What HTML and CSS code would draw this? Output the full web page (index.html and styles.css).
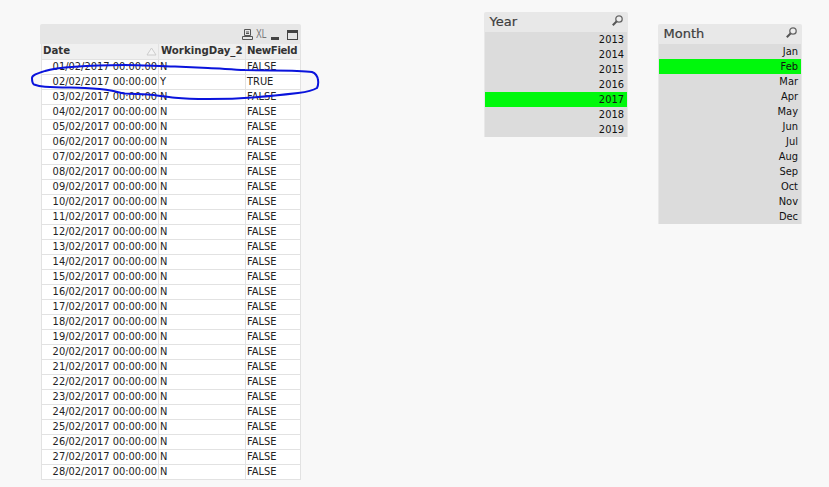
FILE: index.html
```html
<!DOCTYPE html>
<html lang="en">
<head>
<meta charset="utf-8">
<title>Working days</title>
<link rel="stylesheet" href="styles.css">
</head>
<body>
<main class="sheet">
  <section class="object table-object">
    <div class="table-caption">
      <svg class="ico" width="11" height="13" viewBox="0 0 11 13"><path d="M2.500 1.500h6v6h-6zM4 4h3M4 5.500h3M.5 8.500h10v3H.5z" fill="none" stroke="#555" stroke-width="1"/></svg>
      <span class="xl">XL</span>
      <svg class="ico ico-min" width="8" height="13" viewBox="0 0 8 13"><rect x="0" y="9" width="8" height="3" fill="#444"/></svg>
      <svg class="ico ico-max" width="11" height="13" viewBox="0 0 11 13"><rect x=".5" y="2.500" width="10" height="9" fill="none" stroke="#444"/><rect x="0" y="2" width="11" height="3" fill="#444"/></svg>
    </div>
    <table class="grid">
      <colgroup><col class="c-date"><col class="c-day"><col class="c-field"></colgroup>
      <thead>
        <tr><th class="sorted">Date<svg class="sort" width="11" height="9" viewBox="0 0 11 9"><path d="M5.500 1 10 8H1z" fill="#f4f4f4" stroke="#ccc"/></svg></th><th class="wide">WorkingDay_2</th><th class="tight">NewField</th></tr>
      </thead>
      <tbody id="rows"></tbody>
    </table>
  </section>

  <section class="object list year">
    <header class="list-caption"><h2>Year</h2><svg class="search" width="13" height="13" viewBox="0 0 13 13"><circle cx="8" cy="5" r="3.200" fill="#eee" stroke="#666" stroke-width="1.300"/><path d="M5.500 7.500 1.800 11.200" stroke="#555" stroke-width="2"/></svg></header>
    <ul class="items">
      <li>2013</li><li>2014</li><li>2015</li><li>2016</li><li class="on">2017</li><li>2018</li><li>2019</li>
    </ul>
  </section>

  <section class="object list month">
    <header class="list-caption"><h2>Month</h2><svg class="search" width="13" height="13" viewBox="0 0 13 13"><circle cx="8" cy="5" r="3.200" fill="#eee" stroke="#666" stroke-width="1.300"/><path d="M5.500 7.500 1.800 11.200" stroke="#555" stroke-width="2"/></svg></header>
    <ul class="items">
      <li>Jan</li><li class="on">Feb</li><li>Mar</li><li>Apr</li><li>May</li><li>Jun</li><li>Jul</li><li>Aug</li><li>Sep</li><li>Oct</li><li>Nov</li><li>Dec</li>
    </ul>
  </section>

  <svg class="scribble" width="829" height="487" viewBox="0 0 829 487"><path d="M175 66.500C155 66 140 65 125 65C105 65 90 65.500 75 66.700C62 67.500 52 68.500 45 71C37 73.500 32 75 32 78C32 81 32 83 34 84.500C38 86 42 86.500 45 86.700C60 87.500 72 87.500 85 88C95 88.500 105 89.500 112 90.700C118 92 120 93 125 93.500C133 94 140 94 148 94.500C158 95.500 166 97 175 97.700C185 98.700 197 99 208 99C225 99 242 98.300 258 97C272 96 285 94.500 298 93C306 92 313 90.500 317 88C318.500 85 318.500 83 318 80C317.500 76 316 73.500 312 72C306 71 298 71 292 70.700C276 70.500 260 70.200 245 70C232 69.500 220 68.500 208 68C197 67.500 186 67 175 66.500Z" fill="none" stroke="#0a14dc" stroke-width="2"/></svg>
</main>
<script src="rows.js"></script>
</body>
</html>
```

FILE: rows.js
```js
var body = document.getElementById("rows");
for (var d = 1; d <= 28; d++) {
  var day = (d < 10 ? "0" : "") + d;
  var yes = d === 2;
  var tr = document.createElement("tr");
  [day + "/02/2017 00:00:00", yes ? "Y" : "N", yes ? "TRUE" : "FALSE"].forEach(function (text, i) {
    var td = document.createElement("td");
    td.textContent = text;
    if (i === 0) td.className = "num";
    tr.appendChild(td);
  });
  body.appendChild(tr);
}
```

FILE: styles.css
```css
* { box-sizing: border-box; }
html, body { margin: 0; height: 100%; background: #f8f8f8; }
body { overflow: hidden; font-family: "DejaVu Sans", sans-serif; font-size: 9.9px; color: #222; }
.sheet { position: relative; width: 829px; height: 487px; }
.object { position: absolute; }

.table-object { left: 40px; top: 24px; width: 261px; }
.table-caption { height: 20px; background: #e6e6e6; border-radius: 2px 2px 0 0; display: flex; justify-content: flex-end; align-items: center; padding: 0 3px 0 0; }
.ico { display: block; flex: none; }
.xl { width: 10px; margin: 0 5px 0 3px; font-family: "Liberation Sans", sans-serif; font-size: 12px; line-height: 13px; white-space: nowrap; color: #777; transform: scaleX(.72); transform-origin: left center; }
.ico-max { margin-left: 8px; }

.grid { width: 259px; margin-left: 1px; border-collapse: collapse; table-layout: fixed; background: #fff; }
.c-date { width: 117px; }
.c-day { width: 87px; }
.c-field { width: 55px; }
.grid th, .grid td { height: 15px; padding: 0 1px; border: 1px solid #e2e2e2; border-width: 0 1px 1px 0; line-height: 14px; white-space: nowrap; overflow: hidden; text-align: left; font-weight: normal; }
.grid th { background: #f0f0f0; font-weight: bold; font-size: 10.2px; color: #333; }
.grid td:first-child, .grid th:first-child { border-left: 1px solid #e2e2e2; }
.grid .sorted { position: relative; }
.grid .wide { padding-left: 2px; }
.grid .tight { letter-spacing: -.35px; }
.sort { position: absolute; right: 1px; top: 3px; }
.grid .num { text-align: right; }

.list { width: 144px; }
.year { left: 484px; top: 12px; }
.month { left: 658px; top: 24px; }
.list-caption { height: 20px; background: #e8e8e8; border-radius: 2px 2px 0 0; display: flex; justify-content: space-between; align-items: center; padding: 0 4px 0 5.500px; }
.list-caption h2 { margin: 0; font-size: 13px; font-weight: normal; color: #3c3c3c; line-height: 20px; -webkit-text-stroke: .2px #3c3c3c; }
.search { display: block; margin-bottom: 3px; }
.items { list-style: none; margin: 0; padding: 0 1px; background: #e8e8e8; }
.items li { height: 15px; padding-right: 3px; background: #dcdcdc; color: #111; text-align: right; line-height: 15px; }
.items li.on { background: #00f80c; }

.scribble { position: absolute; left: 0; top: 0; pointer-events: none; }
```
